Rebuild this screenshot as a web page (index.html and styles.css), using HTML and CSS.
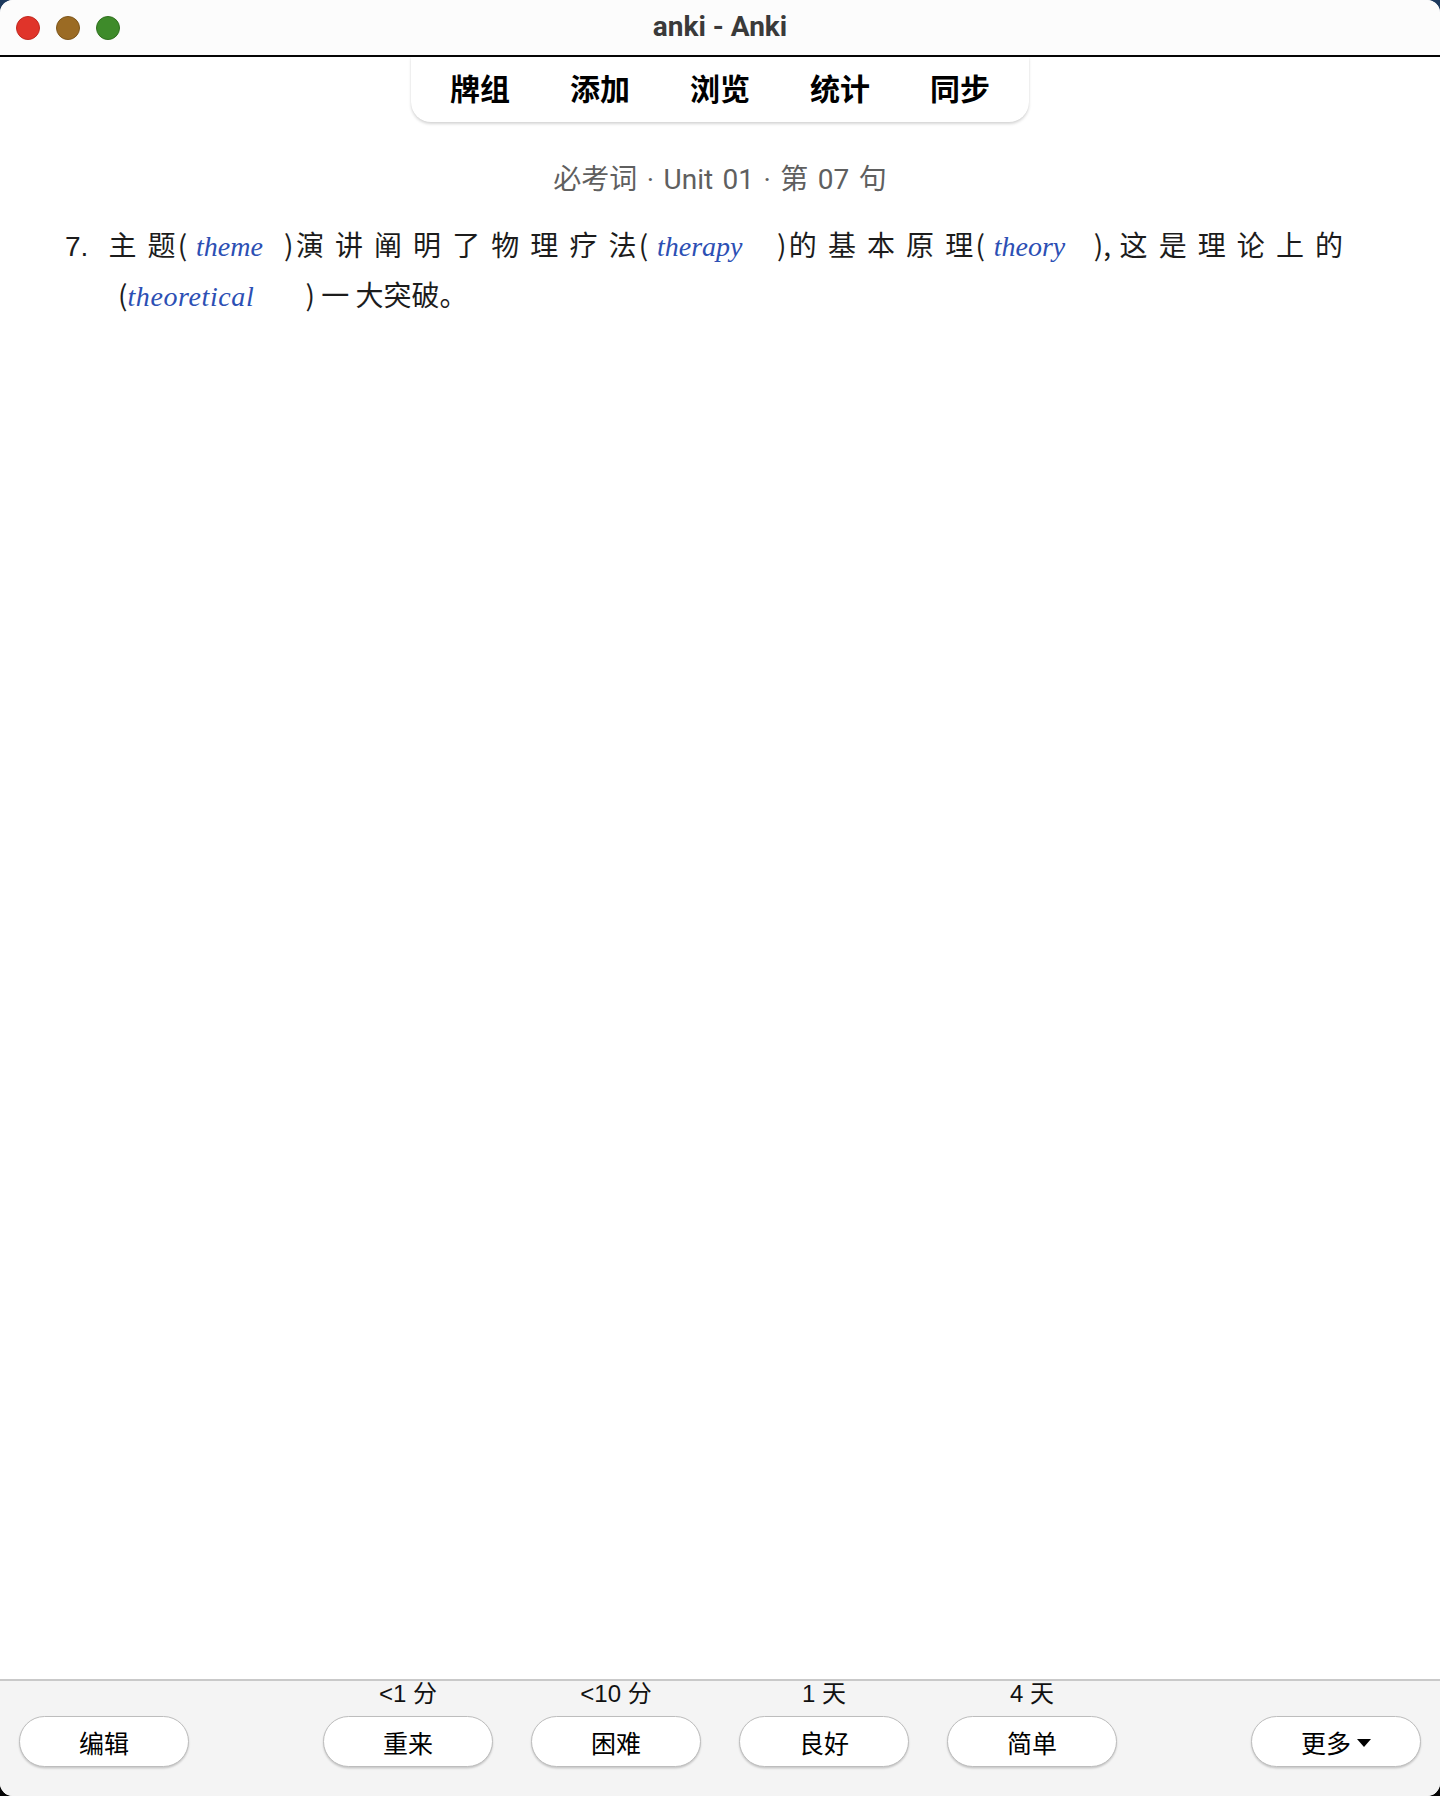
FILE: index.html
```html
<!DOCTYPE html>
<html lang="zh-CN">
<head>
<meta charset="utf-8">
<title>anki - Anki</title>
<link rel="stylesheet" href="styles.css">
</head>
<body>
<div class="window">
  <header class="titlebar">
    <div class="lights">
      <span class="light light-close"></span>
      <span class="light light-min"></span>
      <span class="light light-max"></span>
    </div>
    <div class="title">anki - Anki</div>
  </header>

  <main class="main">
    <nav class="toolbar">
      <a class="tab">牌组</a>
      <a class="tab">添加</a>
      <a class="tab">浏览</a>
      <a class="tab">统计</a>
      <a class="tab">同步</a>
    </nav>

    <section class="card">
      <div class="source">必考词 · Unit 01 · 第 07 句</div>
      <p class="sentence"><span class="num">7.</span>主 题( <i class="ans w-theme">theme</i>)演 讲 阐 明 了 物 理 疗 法( <i class="ans w-therapy">therapy</i>)的 基 本 原 理( <i class="ans w-theory">theory</i>), 这 是 理 论 上 的<span class="nw">(<i class="ans w-theoretical">theoretical</i>)</span> 一 大突破。</p>
    </section>
  </main>

  <footer class="bottombar">
    <div class="side">
      <button class="btn">编辑</button>
    </div>
    <div class="answers">
      <div class="answer">
        <div class="due">&lt;1 分</div>
        <button class="btn">重来</button>
      </div>
      <div class="answer">
        <div class="due">&lt;10 分</div>
        <button class="btn">困难</button>
      </div>
      <div class="answer">
        <div class="due">1 天</div>
        <button class="btn">良好</button>
      </div>
      <div class="answer">
        <div class="due">4 天</div>
        <button class="btn">简单</button>
      </div>
    </div>
    <div class="side">
      <button class="btn">更多<span class="caret"></span></button>
    </div>
  </footer>
</div>
</body>
</html>
```

FILE: styles.css
```css
html, body {
  margin: 0;
  padding: 0;
}

body {
  width: 1440px;
  height: 1796px;
  background: linear-gradient(180deg, #1d3a5e 0%, #0d1522 40%, #050505 100%);
  overflow: hidden;
}

.window {
  width: 1440px;
  height: 1796px;
  border-radius: 13px;
  overflow: hidden;
  background: #ffffff;
  display: flex;
  flex-direction: column;
  font-family: "Noto Sans CJK SC", sans-serif;
}

/* ---- title bar ---- */
.titlebar {
  height: 55px;
  flex: none;
  background: #fcfcfc;
  border-bottom: 2px solid #050505;
  display: flex;
  align-items: center;
  position: relative;
}

.lights {
  display: flex;
  gap: 16px;
  padding-left: 16px;
  padding-top: 1px;
}

.light {
  width: 24px;
  height: 24px;
  border-radius: 50%;
  box-sizing: border-box;
}

.light-close { background: #e0342a; border: 1px solid #c2281f; }
.light-min   { background: #9b6b24; border: 1px solid #7e561a; }
.light-max   { background: #3e8b2a; border: 1px solid #2f701e; }

.title {
  position: absolute;
  left: 0;
  right: 0;
  top: 0;
  bottom: 0;
  display: flex;
  align-items: center;
  justify-content: center;
  font-family: Roboto, "Liberation Sans", sans-serif;
  font-weight: 700;
  font-size: 28px;
  color: #3a3a3a;
  padding-bottom: 2px;
}

/* ---- main web view ---- */
.main {
  flex: 1;
  display: flex;
  flex-direction: column;
  align-items: center;
  background: #ffffff;
}

.toolbar {
  display: flex;
  gap: 60px;
  padding: 0 39px;
  height: 65px;
  align-items: center;
  background: #ffffff;
  border-radius: 0 0 20px 20px;
  box-shadow: 0 2px 3px rgba(0, 0, 0, 0.16), 0 0 1px rgba(0, 0, 0, 0.08);
}

.tab {
  font-size: 30px;
  font-weight: 700;
  color: #000;
  line-height: 1;
  padding-bottom: 6px;
}

.card {
  align-self: stretch;
  padding: 40px 97px 0 0;
}

.source {
  text-align: center;
  font-family: Roboto, "Noto Sans CJK SC", sans-serif;
  font-size: 28px;
  line-height: 36px;
  word-spacing: 2.5px;
  color: #5f5f5f;
  padding-left: 97px;
}

.sentence {
  margin: 21px 0 0 0;
  padding-left: 118px;
  text-indent: -53px;
  font-size: 28px;
  line-height: 50px;
  color: #1c1c1c;
  text-align: justify;
}

.num {
  font-family: "Liberation Sans", sans-serif;
  display: inline-block;
  text-indent: 0;
  width: 41px;
  line-height: 28px;
}

.nw {
  white-space: nowrap;
}

.ans {
  display: inline-block;
  text-indent: 0;
  line-height: 28px;
  font-family: "Liberation Serif", serif;
  font-style: italic;
  color: #2c4fb4;
}

.w-theme { width: 88px; }
.w-therapy { width: 120px; }
.w-theory { width: 100px; }
.w-theoretical { width: 178px; letter-spacing: 0.6px; }

/* ---- bottom answer bar ---- */
.bottombar {
  flex: none;
  height: 117px;
  background: #f4f4f4;
  border-top: 2px solid #c9c9c9;
  display: flex;
  justify-content: space-between;
  align-items: flex-end;
  padding: 0 19px 29px 19px;
  box-sizing: border-box;
}

.answers {
  display: flex;
  gap: 38px;
}

.answer {
  display: flex;
  flex-direction: column;
  align-items: center;
}

.due {
  font-family: "Liberation Sans", "Noto Sans CJK SC", sans-serif;
  font-size: 24px;
  line-height: 28px;
  color: #111;
  margin-bottom: 8px;
}

.btn {
  width: 170px;
  height: 51px;
  border-radius: 26px;
  border: 1.5px solid #bdbdbd;
  background: #ffffff;
  box-shadow: 0 1.5px 2px rgba(0, 0, 0, 0.18);
  font-family: "Noto Sans CJK SC", sans-serif;
  font-size: 25px;
  color: #000;
  padding: 0;
  display: flex;
  align-items: center;
  justify-content: center;
}

.caret {
  width: 0;
  height: 0;
  border-left: 7px solid transparent;
  border-right: 7px solid transparent;
  border-top: 8px solid #000;
  margin-left: 6px;
  margin-top: 3px;
}
```
